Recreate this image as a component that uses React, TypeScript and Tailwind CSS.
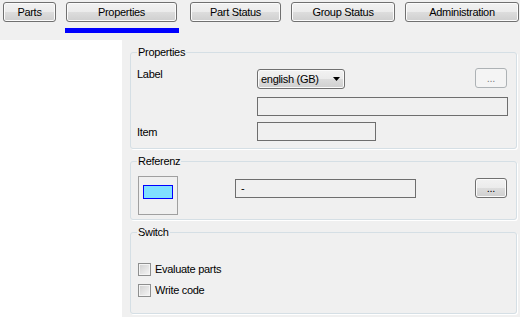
import type { ReactNode } from "react";

const button =
  "flex items-center justify-center h-[20px] rounded-[3px] border border-[#707070] bg-[linear-gradient(to_bottom,#f2f2f2_0%,#ebebeb_50%,#dddddd_50%,#cfcfcf_100%)] shadow-[inset_0_0_0_1px_#fbfbfb]";

const textbox = "h-[19px] border border-[#6e6e6e] bg-[#f0f0f0]";

type Tab = { label: string; width: string; ml: string; active?: boolean };

const tabs: Tab[] = [
  { label: "Parts", width: "w-[53px]", ml: "ml-0" },
  { label: "Properties", width: "w-[111px]", ml: "ml-[10px]", active: true },
  { label: "Part Status", width: "w-[91px]", ml: "ml-[11px]" },
  { label: "Group Status", width: "w-[104px]", ml: "ml-[10px]" },
  { label: "Administration", width: "w-[114px]", ml: "ml-[10px]" },
];

function Group({ title, className, children }: { title: string; className: string; children: ReactNode }) {
  return (
    <div
      className={`relative rounded-[3px] border border-[#d5dfe5] shadow-[1px_1px_0_#ffffff] ${className}`}
    >
      <span className="absolute left-[6px] -top-[7px] px-[1px] bg-[#f0f0f0] leading-[13px]">
        {title}
      </span>
      {children}
    </div>
  );
}

function Checkbox({ label }: { label: string }) {
  return (
    <div className="flex items-center h-[13px]">
      <div className="w-[13px] h-[13px] border border-[#8e8f8f] bg-[linear-gradient(135deg,#cfcfcf,#f6f6f6)] shadow-[inset_0_0_0_1px_#f4f4f4]" />
      <span className="ml-[4px] leading-[13px]">{label}</span>
    </div>
  );
}

export default function App() {
  return (
    <div className="w-[520px] h-[317px] overflow-hidden bg-[#f0f0f0] text-[11px] tracking-[-0.3px] text-black font-['Liberation_Sans',Arial,sans-serif]">
      {/* ── Tabs ─────────────────────────────────────── */}
      <div className="h-[40px] flex items-start pt-[2px] pl-[3px]">
        {tabs.map((t) => (
          <div key={t.label} className={`flex flex-col ${t.ml}`}>
            <div className={`${button} ${t.width}`}>{t.label}</div>
            {t.active && <div className="mt-[6px] -ml-[1px] w-[114px] h-[5px] bg-[#0000ff]" />}
          </div>
        ))}
      </div>

      <div className="flex h-[277px]">
        <div className="w-[122px] bg-white" />

        <div className="flex-1 pt-[12px] pl-[8px] pr-[3px]">
          {/* Properties */}
          <Group title="Properties" className="h-[97px] pt-[15px] pl-[6px]">
            <div className="flex items-start h-[21px]">
              <span className="w-[120px] leading-[13px]">Label</span>
              <div className={`${button} mt-[1px] w-[88px] !justify-between pl-[3px] pr-[4px]`}>
                <span>english (GB)</span>
                <svg width="7" height="4" viewBox="0 0 7 4">
                  <path d="M0 0h7L3.5 4z" fill="#000" />
                </svg>
              </div>
              <div className="ml-auto mr-[9px] w-[32px] h-[20px] flex items-center justify-center rounded-[3px] border border-[#adb2b5] bg-[#f4f4f4] text-[#838383]">
                ...
              </div>
            </div>
            <div className={`${textbox} mt-[8px] ml-[120px] w-[251px]`} />
            <div className="flex items-start mt-[6px]">
              <span className="w-[120px] mt-[4px] leading-[13px]">Item</span>
              <div className={`${textbox} w-[119px]`} />
            </div>
          </Group>

          {/* Referenz */}
          <Group title="Referenz" className="mt-[12px] h-[59px] pt-[14px] pl-[7px]">
            <div className="flex items-start">
              <div className="w-[40px] h-[39px] border border-[#a0a0a0] pt-[8px] px-[4px]">
                <div className="w-[30px] h-[14px] border border-[#0000ff] bg-[#80e0ff]" />
              </div>
              <div className={`${textbox} ml-[57px] mt-[3px] w-[181px] pl-[5px] leading-[17px]`}>-</div>
              <div className={`${button} ml-auto mr-[9px] mt-[2px] w-[32px]`}>...</div>
            </div>
          </Group>

          {/* Switch */}
          <Group title="Switch" className="mt-[12px] h-[82px] pt-[30px] pl-[7px]">
            <Checkbox label="Evaluate parts" />
            <div className="mt-[8px]">
              <Checkbox label="Write code" />
            </div>
          </Group>
        </div>
      </div>
    </div>
  );
}
